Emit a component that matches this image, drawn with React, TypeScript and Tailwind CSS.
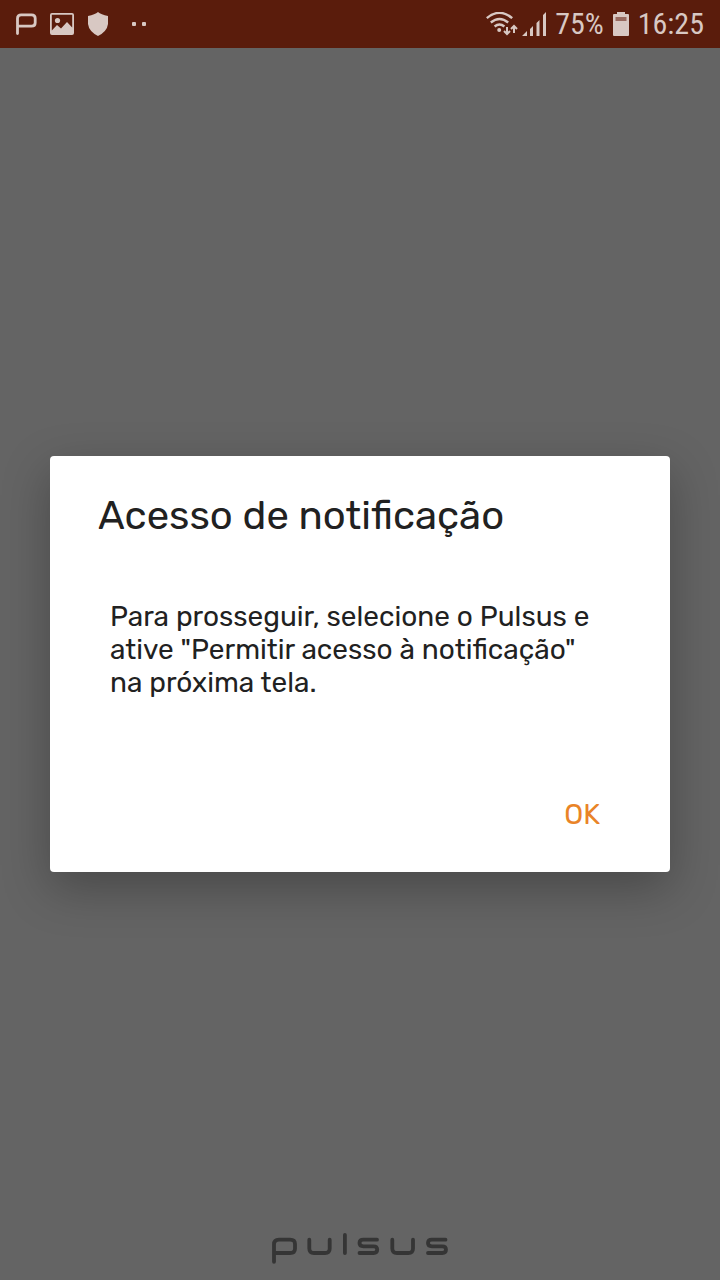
function BrandMark() {
  return (
    <svg className="h-6 w-6" viewBox="0 0 24 24" fill="none" stroke="currentColor" strokeWidth="2.8" strokeLinecap="round" aria-hidden="true">
      <path d="M3.5 21.600V6.500Q3.500 2.800 7.200 2.800H17.500Q21.200 2.800 21.200 6.300V10.700Q21.200 14.200 17.500 14.200H3.500" />
    </svg>
  );
}

function PictureIcon() {
  return (
    <svg className="h-6 w-6" viewBox="0 0 24 24" fill="currentColor" aria-hidden="true">
      <path
        fillRule="evenodd"
        d="M2 1H22Q24 1 24 3V21Q24 23 22 23H2Q0 23 0 21V3Q0 1 2 1ZM1.800 2.800V18.500L7 13L11 16.500L17 10L22.200 15.500V2.800Z"
      />
      <circle cx="7.5" cy="8.5" r="2.6" />
    </svg>
  );
}

function ShieldIcon() {
  return (
    <svg className="h-6 w-6" viewBox="0 0 24 24" fill="currentColor" aria-hidden="true">
      <path d="M12 0Q15 2.4 22 4V12Q21 19.5 12 24Q3 19.5 2 12V4Q9 2.4 12 0Z" />
    </svg>
  );
}

function MoreDots() {
  return (
    <svg className="h-6 w-4" viewBox="0 0 16 24" fill="currentColor" aria-hidden="true">
      <rect x="0" y="10" width="4" height="4" rx="1" />
      <rect x="10" y="10" width="4" height="4" rx="1" />
    </svg>
  );
}

function WifiIcon() {
  return (
    <svg className="h-6 w-8" viewBox="0 0 32 24" fill="none" stroke="currentColor" strokeWidth="2.4" aria-hidden="true">
      <path d="M.8 6.2Q13.5-4.5 26.2 6.2M4.8 10.5Q13.5 3.5 22.2 10.5M8.6 14.5Q13.5 10.5 18.4 14.5" />
      <circle cx="13.2" cy="18" r="2" fill="currentColor" stroke="none" />
      <path strokeWidth="2" d="M21 15V22M18 19L21 22L24 19M28 21V14M25 17L28 14L31 17" />
    </svg>
  );
}

function SignalIcon() {
  return (
    <svg className="h-6 w-6" viewBox="0 0 24 24" fill="currentColor" aria-hidden="true">
      <path d="M0 24L5 19V24ZM8 17L11 14V24H8ZM14.500 11L17.500 8V24H14.500ZM21 3L24 0V24H21Z" />
    </svg>
  );
}

function BatteryIcon() {
  return (
    <svg className="h-6 w-4" viewBox="0 0 16 24" aria-hidden="true">
      <path fill="currentColor" d="M4 0H12V2H15Q16 2 16 3V23Q16 24 15 24H1Q0 24 0 23V3Q0 2 1 2H4Z" />
      <path fill="#986a60" d="M2.500 5H13.500V9H2.500Z" />
    </svg>
  );
}

function PulsusLogo() {
  return (
    <svg
      className="h-8 w-44"
      viewBox="0 0 176 32"
      fill="none"
      stroke="#353535"
      strokeWidth="3.8"
      strokeLinecap="round"
      strokeLinejoin="round"
      role="img"
      aria-label="Pulsus"
    >
      <path d="M2 29.800V12.500Q2 7.700 7 7.700H18Q23 7.700 23 12V16.700Q23 21 18 21H2" />
      <path d="M37.300 7.700V16.500Q37.300 21 42 21H53Q57.700 21 57.700 16.500V7.700" />
      <path d="M72.900 3V21" />
      <path d="M105 7.700H91.500Q87.500 7.700 87.500 11Q87.500 14.300 91.500 14.300H101.500Q105.200 14.300 105.200 17.600Q105.200 21 101.500 21H87.500" />
      <path d="M120.300 7.700V16.500Q120.300 21 125 21H136.300Q141 21 141 16.500V7.700" />
      <path d="M173.500 7.700H160Q156 7.700 156 11Q156 14.300 160 14.300H170.200Q174 14.300 174 17.600Q174 21 170.200 21H156" />
    </svg>
  );
}

export default function App() {
  return (
    <div className="flex min-h-screen flex-col bg-[#646464] font-['Rubik','Roboto',sans-serif] text-[#212121]">
      <header className="flex h-12 items-center justify-between bg-[#5a1c0c] pr-4 pl-3.5 text-[#d8c8c3]">
        <div className="flex items-center gap-3">
          <BrandMark />
          <PictureIcon />
          <ShieldIcon />
          <div className="pl-2.5">
            <MoreDots />
          </div>
        </div>
        <div className="flex items-center gap-[9px] font-['Roboto_Condensed','Liberation_Sans_Narrow','Roboto',sans-serif] text-[30px] leading-8">
          <div className="flex items-center gap-1">
            <WifiIcon />
            <SignalIcon />
          </div>
          <span>75%</span>
          <BatteryIcon />
          <time>16:25</time>
        </div>
      </header>

      <main className="flex flex-1 items-center px-[50px] pt-12">
        <section
          role="dialog"
          aria-modal="true"
          aria-labelledby="dialog-title"
          className="w-full rounded bg-white px-12 pt-9 pb-[29px] shadow-[0_16px_48px_rgba(0,0,0,0.28)]"
        >
          <h1 id="dialog-title" className="text-[40px] leading-12">
            Acesso de notificação
          </h1>
          <p className="px-3 pt-15 text-[28px] leading-[33px]">
            Para prosseguir, selecione o Pulsus e ative "Permitir acesso à notificação" na próxima tela.
          </p>
          <div className="flex justify-end pt-22">
            <button type="button" className="px-[22px] py-3 text-[28px] leading-8 text-[#e98427]">
              OK
            </button>
          </div>
        </section>
      </main>

      <footer className="flex h-12 justify-center">
        <PulsusLogo />
      </footer>
    </div>
  );
}
